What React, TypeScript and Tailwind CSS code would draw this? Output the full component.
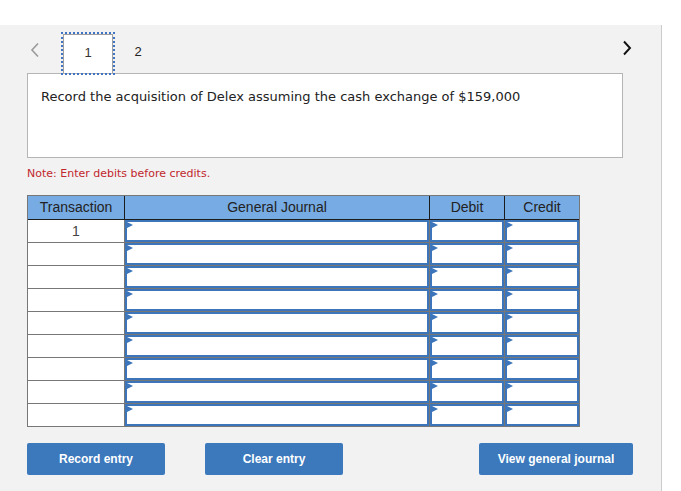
import React from 'react';

// Journal entry worksheet — tabbed question with a general journal grid

const ROWS = 9;

function Marker() {
  return (
    <span className="absolute left-0 top-0 w-0 h-0 border-y-[3.5px] border-y-transparent border-l-[6px] border-l-[#3d75bb]" />
  );
}

function InputCell({ last }: { last?: boolean }) {
  return (
    <div className={last ? 'h-[23px] border-b border-[#777]' : 'h-[23px] border-b border-r border-[#777]'}>
      <div className="relative h-full w-full bg-white border-2 border-[#3d75bb]">
        <Marker />
      </div>
    </div>
  );
}

export default function App() {
  return (
    <div className="w-[681px] h-[491px] bg-white font-['Liberation_Sans',Arial,sans-serif] text-[#333]">
      <div className="h-[25px]" />
      <div className="w-[662px] h-[466px] bg-[#f2f2f2] border-r border-[#cccccc]">
        {/* Tabs */}
        <div className="flex h-[48px] pt-[7px]">
          <div className="w-[61px] flex items-start pt-[10px] pl-[30px]">
            <svg width="10" height="16" viewBox="0 0 10 16">
              <polyline points="8,1.5 2,8 8,14.5" fill="none" stroke="#9a9a9a" strokeWidth="1.6" />
            </svg>
          </div>
          <div className="relative z-10 w-[54px] h-[43px] border-2 border-dotted border-[#3f74c2]">
            <div className="h-full bg-white border-x border-t border-[#a0a0a0] flex justify-center pt-[8px] text-[13px]">1</div>
          </div>
          <div className="w-[46px] text-center pt-[10px] text-[13px] text-[#222]">2</div>
          <div className="ml-auto pr-[29px] pt-[8px]">
            <svg width="10" height="16" viewBox="0 0 10 16">
              <polyline points="2,1.5 8,8 2,14.5" fill="none" stroke="#111" strokeWidth="1.9" />
            </svg>
          </div>
        </div>

        {/* Question */}
        <div className="ml-[27px] w-[596px] h-[85px] bg-white border border-[#b5b5b5] pl-[13px] pt-[15px] font-['DejaVu_Sans',Verdana,sans-serif] text-[13px] leading-[16px] text-[#222]">
          Record the acquisition of Delex assuming the cash exchange of $159,000
        </div>

        <div className="ml-[27px] mt-[9px] font-['DejaVu_Sans',Verdana,sans-serif] text-[11px] leading-[14px] text-[#c1272d]">
          Note: Enter debits before credits.
        </div>

        {/* Journal grid */}
        <div className="ml-[27px] mt-[14px] w-[553px] border-x border-t border-[#777] text-[13px]">
          <div className="grid grid-cols-[97px_305px_75px_74px] h-[24px] bg-[#77abe3] border-b border-[#1c1c1c] text-[14px] text-[#222]">
            <div className="border-r border-[#1c1c1c] flex items-center justify-center">Transaction</div>
            <div className="border-r border-[#1c1c1c] flex items-center justify-center">General Journal</div>
            <div className="border-r border-[#1c1c1c] flex items-center justify-center">Debit</div>
            <div className="flex items-center justify-center">Credit</div>
          </div>
          {Array.from({ length: ROWS }).map((_, i) => (
            <div key={i} className="grid grid-cols-[97px_305px_75px_74px]">
              <div className="h-[23px] bg-white border-b border-r border-[#777] flex items-center justify-center text-[14px] text-[#444]">
                {i === 0 ? '1' : ''}
              </div>
              <InputCell />
              <InputCell />
              <InputCell last />
            </div>
          ))}
        </div>

        {/* Actions */}
        <div className="flex ml-[27px] mt-[16px] text-[12px] font-bold text-white">
          <button className="w-[138px] h-[32px] rounded-[2px] bg-[#3b78bc]">Record entry</button>
          <button className="ml-[40px] w-[138px] h-[32px] rounded-[2px] bg-[#3b78bc]">Clear entry</button>
          <button className="ml-[136px] w-[154px] h-[32px] rounded-[2px] bg-[#3b78bc]">View general journal</button>
        </div>
      </div>
    </div>
  );
}
